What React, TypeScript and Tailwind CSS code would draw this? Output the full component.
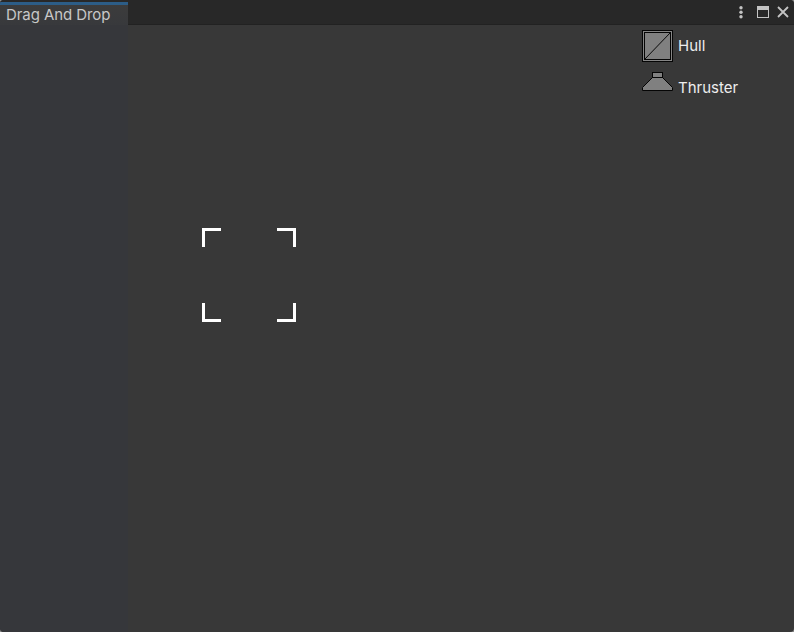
import React from "react";

function HullIcon() {
  return (
    <svg width="31" height="32" viewBox="0 0 31 32" className="block">
      <rect x="0.5" y="0.5" width="30" height="31" fill="#858585" stroke="#050505" />
      <rect x="2.5" y="2.5" width="26" height="27" fill="#808080" stroke="#050505" />
      <path d="M2.5 29.5L28.5 2.5" stroke="#080808" strokeWidth="1" />
    </svg>
  );
}

function ThrusterIcon() {
  return (
    <svg width="31" height="20" viewBox="0 0 31 20" className="block">
      <path d="M10.5 5.5L0.5 15.5V18.5H30.5V15.5L20.5 5.5Z" fill="#808080" stroke="#050505" />
      <rect x="10.5" y="0.5" width="10" height="5" fill="#808080" stroke="#050505" />
    </svg>
  );
}

function DropTarget() {
  return (
    <div className="grid h-[94px] w-[94px] grid-cols-2 content-between justify-between">
      <div className="h-[19px] w-[19px] border-t-[3px] border-l-[3px] border-white" />
      <div className="h-[19px] w-[19px] justify-self-end border-t-[3px] border-r-[3px] border-white" />
      <div className="h-[19px] w-[19px] border-b-[3px] border-l-[3px] border-white" />
      <div className="h-[19px] w-[19px] justify-self-end border-r-[3px] border-b-[3px] border-white" />
    </div>
  );
}

export default function App() {
  return (
    <div className="h-[632px] w-[794px] bg-[#8a8a8a]">
      <div className="flex h-full overflow-hidden rounded-[4px] bg-[#383838] font-[Inter,sans-serif] text-[15px] leading-5">
        <aside className="flex w-32 flex-col bg-[#36373b]">
          <div className="h-0.5 bg-[#282828]" />
          <div className="h-[3px] bg-[#2c5d87]" />
          <div className="h-5 bg-linear-to-b from-[#3c3c3c] to-[#38393c] pl-1.5 text-[#c8c8c8]">
            <span className="block whitespace-nowrap tracking-[-0.08px]">Drag And Drop</span>
          </div>
        </aside>
        <main className="flex flex-1 flex-col">
          <header className="flex h-[25px] justify-end border-b border-[#222222] bg-[#282828]">
            <svg width="60" height="24" viewBox="0 0 60 24" className="block">
              <g fill="#c4c4c4">
                <circle cx="7" cy="7.7" r="1.7" />
                <circle cx="7" cy="12.2" r="1.7" />
                <circle cx="7" cy="16.7" r="1.7" />
                <path fillRule="evenodd" d="M23 6H35V18H23ZM24 10V17H34V10Z" />
              </g>
              <path d="M44 7L54 17M54 7L44 17" stroke="#c4c4c4" strokeWidth="1.8" />
            </svg>
          </header>
          <div className="flex flex-1 justify-between">
            <div className="pt-[203px] pl-[74px]">
              <DropTarget />
            </div>
            <ul className="w-[152px] pt-[5px] text-[#eeeeee]">
              <li className="flex h-[42px] gap-[5px]">
                <HullIcon />
                <span className="pt-[6px]">Hull</span>
              </li>
              <li className="flex gap-[5px]">
                <ThrusterIcon />
                <span className="pt-[6px]">Thruster</span>
              </li>
            </ul>
          </div>
        </main>
      </div>
    </div>
  );
}
